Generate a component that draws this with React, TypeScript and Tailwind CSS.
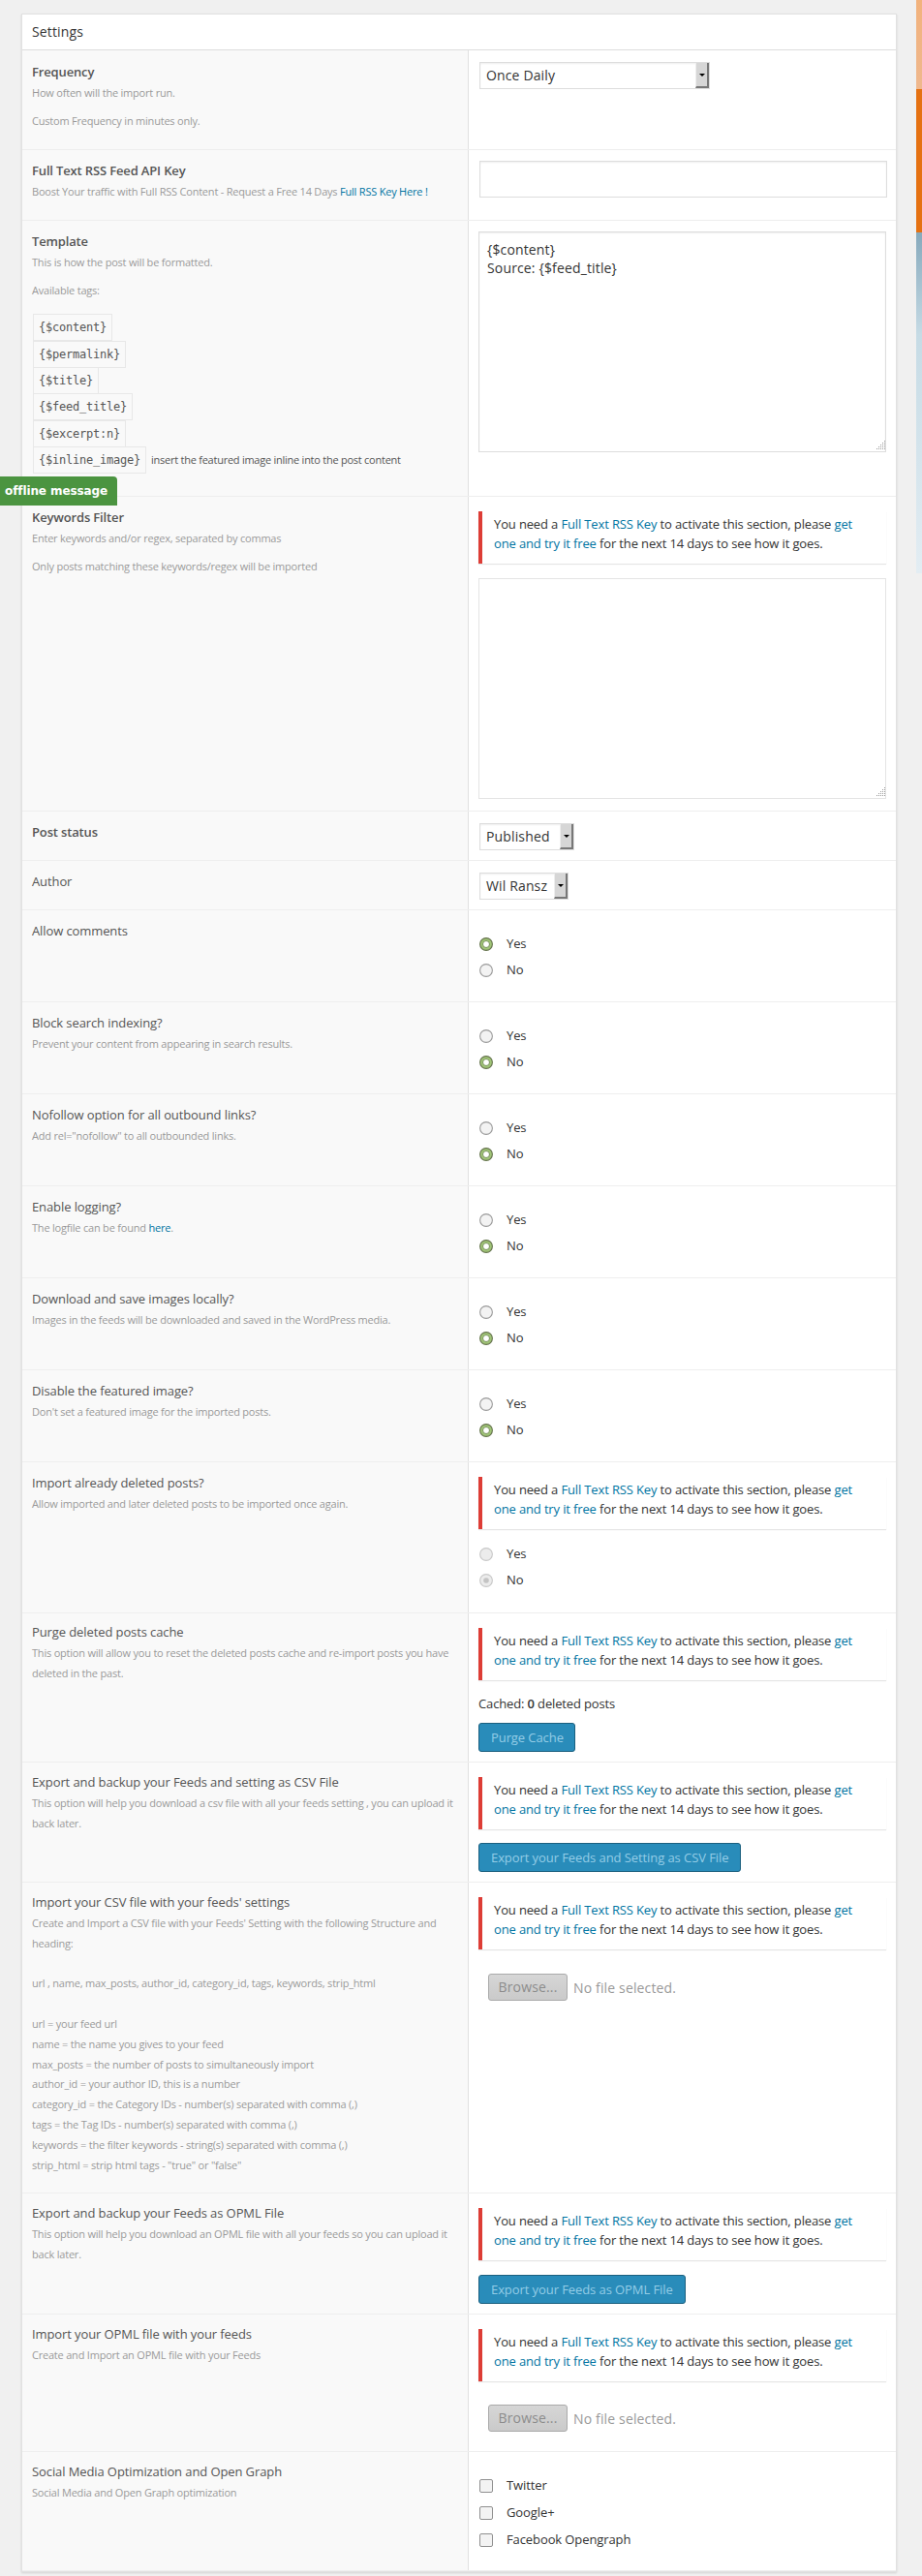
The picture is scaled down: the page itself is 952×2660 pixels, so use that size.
import type { ReactNode } from 'react';

type Option = { label: string; checked?: boolean };

function Link({ children }: { children: ReactNode }) {
  return <a href="#" className="text-[#0074a2]">{children}</a>;
}

function Row({ title, bold, desc, height, children, pad = 'pt-[11px]', className = '' }: {
  title: string;
  bold?: boolean;
  desc?: ReactNode;
  height: string;
  children: ReactNode;
  pad?: string;
  className?: string;
}) {
  return (
    <div className={`flex border-b border-[#eeeeee] ${height}`}>
      <div className={`w-[461px] shrink-0 bg-[#f9f9f9] border-r border-[#e1e1e1] px-[10px] ${pad}`}>
        <h4 className={`text-[13px] leading-[20px] text-[#555] ${bold ? 'font-semibold tracking-[-0.15px]' : 'tracking-[-0.1px]'}`}>{title}</h4>
        <div className="mt-[2px] space-y-[8px] text-[11px] leading-[20.8px] tracking-[-0.21px] text-[#999]">{desc}</div>
      </div>
      <div className={`flex-1 pl-[10px] pr-[10px] ${className}`}>{children}</div>
    </div>
  );
}

function Notice() {
  return (
    <div className="mt-[15px] h-[54px] w-[421px] border-l-4 border-[#dd3d36] bg-white pl-[12px] pt-[4px] text-[13px] leading-[19.5px] tracking-[-0.14px] text-[#333] shadow-[0_1px_1px_0_rgba(0,0,0,0.1)]">
      You need a <Link>Full Text RSS Key</Link> to activate this section, please <Link>get<br />one and try it free</Link> for the next 14 days to see how it goes.
    </div>
  );
}

function Select({ value, width }: { value: string; width: string }) {
  return (
    <div className={`mt-[12px] ml-px flex h-[28px] border border-[#ddd] bg-white shadow-[inset_0_1px_2px_rgba(0,0,0,0.07)] ${width}`}>
      <span className="flex-1 pl-[6px] text-[14px] leading-[25px] tracking-[0.14px] whitespace-nowrap text-[#333]">{value}</span>
      <span className="flex w-[14px] shrink-0 items-center justify-center border-b-2 border-r-2 border-b-[#777] border-r-[#777] border-l border-l-[#eee] bg-[#d6d6d6]">
        <svg width="6" height="3" viewBox="0 0 6 3"><path d="M0 0h6L3 3z" fill="#000" /></svg>
      </span>
    </div>
  );
}

function Textarea({ className = '', children }: { className?: string; children?: ReactNode }) {
  return (
    <div className={`relative h-[228px] w-[421px] border bg-white px-[8px] py-[8px] text-[14px] leading-[19px] tracking-[0.15px] text-[#333] ${className}`}>
      {children}
      <svg className="absolute bottom-px right-0" width="10" height="10" viewBox="0 0 10 10">
        <path d="M9 0h1v1H9zM7 2h1v1H7zM9 2h1v1H9zM5 4h1v1H5zM7 4h1v1H7zM9 4h1v1H9zM3 6h1v1H3zM5 6h1v1H5zM7 6h1v1H7zM9 6h1v1H9zM1 8h1v1H1zM3 8h1v1H3zM5 8h1v1H5zM7 8h1v1H7zM9 8h1v1H9z" fill="#999" />
      </svg>
    </div>
  );
}

function Radio({ checked, disabled }: { checked?: boolean; disabled?: boolean }) {
  const ring = disabled ? '#c8c8c8' : checked ? '#66734f' : '#9a9a9a';
  const fill = disabled ? '#ececec' : checked ? '#a0c576' : '#f3f3f3';
  return (
    <svg width="14" height="14" viewBox="0 0 14 14">
      <circle cx="7" cy="7" r="6.4" fill={fill} stroke={ring} strokeWidth="1.1" />
      {checked && !disabled && <circle cx="7" cy="7" r="3.5" fill="#fff" stroke="#78925a" strokeWidth="1" />}
      {checked && disabled && <circle cx="7" cy="7" r="2.8" fill="#c4c4c4" />}
    </svg>
  );
}

function YesNo({ value, disabled, className = 'pt-[21px]' }: { value: 'Yes' | 'No'; disabled?: boolean; className?: string }) {
  const options: Option[] = [
    { label: 'Yes', checked: value === 'Yes' },
    { label: 'No', checked: value === 'No' },
  ];
  return (
    <div className={className}>
      {options.map(o => (
        <label key={o.label} className="ml-px flex h-[27px] items-center gap-[14px] text-[13px] tracking-[-0.1px] text-[#333]">
          <Radio checked={o.checked} disabled={disabled} />
          {o.label}
        </label>
      ))}
    </div>
  );
}

function Button({ children, className = '' }: { children: string; className?: string }) {
  return (
    <button className={`block h-[30px] rounded-[3px] border border-[#1b607f] bg-[#298cba] text-left pl-[12px] text-[13px] leading-[28px] tracking-[-0.08px] text-[#94cde7] ${className}`}>
      {children}
    </button>
  );
}

function FileInput({ className }: { className: string }) {
  return (
    <div className={`flex items-center pl-[10px] text-[14px] tracking-[0.15px] text-[#999] ${className}`}>
      <span className="h-[28px] w-[82px] rounded-[3px] border border-[#aaa] bg-gradient-to-b from-[#d6d6d6] to-[#cacaca] text-center leading-[26px] text-[#8c8c8c]">Browse...</span>
      <span className="ml-[6px]">No file selected.</span>
    </div>
  );
}

const TAGS = ['{$content}', '{$permalink}', '{$title}', '{$feed_title}', '{$excerpt:n}', '{$inline_image}'];

export default function App() {
  return (
    <div className="relative h-[2660px] w-[952px] overflow-hidden bg-[#f0f0f0] pl-[22px] pt-[14px] font-['Open_Sans',sans-serif]">
      <div className="w-[904px] border border-[#e1e1e1] bg-white shadow-[0_1px_2px_rgba(0,0,0,0.12)]">
        <h3 className="h-[37px] border-b border-[#ddd] pl-[10px] text-[14px] leading-[35px] tracking-[0.15px] text-[#333]">Settings</h3>

        <Row title="Frequency" bold height="h-[103px]" pad="pt-[12px]" desc={<><p>How often will the import run.</p><p>Custom Frequency in minutes only.</p></>}>
          <Select value="Once Daily" width="w-[238px]" />
        </Row>

        <Row title="Full Text RSS Feed API Key" bold height="h-[73px]"
          desc={<p>Boost Your traffic with Full RSS Content - Request a Free 14 Days <Link>Full RSS Key Here !</Link></p>}>
          <div className="ml-px mt-[11px] h-[38px] w-[421px] border border-[#ddd] bg-white shadow-[inset_0_1px_2px_rgba(0,0,0,0.07)]" />
        </Row>

        <Row title="Template" bold height="h-[285px]"
          desc={
            <>
              <p>This is how the post will be formatted.</p>
              <p>Available tags:</p>
              <div className="pt-[6px] pl-px">
                {TAGS.map(tag => (
                  <div key={tag} className="flex h-[27.4px] items-center text-[#555]">
                    <code className="h-[28px] border border-[#e8e8e8] px-[5px] font-['DejaVu_Sans_Mono',monospace] text-[12px] leading-[26px] tracking-[-0.22px]">{tag}</code>
                    {tag === '{$inline_image}' && <span className="ml-[5px] tracking-[-0.25px]">insert the featured image inline into the post content</span>}
                  </div>
                ))}
              </div>
            </>
          }>
          <Textarea className="mt-[11px] border-[#ddd] shadow-[inset_0_1px_2px_rgba(0,0,0,0.07)]">
            {'{$content}'}<br />Source: {'{$feed_title}'}
          </Textarea>
        </Row>

        <Row title="Keywords Filter" bold height="h-[325px]"
          desc={<><p>Enter keywords and/or regex, separated by commas</p><p>Only posts matching these keywords/regex will be imported</p></>}>
          <Notice />
          <Textarea className="mt-[15px] border-[#e4e4e4]" />
        </Row>

        <Row title="Post status" bold height="h-[51px]"><Select value="Published" width="w-[98px]" /></Row>
        <Row title="Author" height="h-[51px]"><Select value="Wil Ransz" width="w-[92px]" /></Row>

        <Row title="Allow comments" height="h-[95px]"><YesNo value="Yes" /></Row>
        <Row title="Block search indexing?" height="h-[95px]" desc="Prevent your content from appearing in search results."><YesNo value="No" /></Row>
        <Row title="Nofollow option for all outbound links?" height="h-[95px]" desc={'Add rel="nofollow" to all outbounded links.'}><YesNo value="No" /></Row>
        <Row title="Enable logging?" height="h-[95px]" desc={<p>The logfile can be found <Link>here</Link>.</p>}><YesNo value="No" /></Row>
        <Row title="Download and save images locally?" height="h-[95px]" desc="Images in the feeds will be downloaded and saved in the WordPress media."><YesNo value="No" /></Row>
        <Row title="Disable the featured image?" height="h-[95px]" desc="Don't set a featured image for the imported posts."><YesNo value="No" /></Row>

        <Row title="Import already deleted posts?" height="h-[156px]" desc="Allow imported and later deleted posts to be imported once again.">
          <Notice />
          <YesNo value="No" disabled className="pt-[12px]" />
        </Row>

        <Row title="Purge deleted posts cache" height="h-[154px]" pad="pt-[9px]" desc="This option will allow you to reset the deleted posts cache and re-import posts you have deleted in the past.">
          <Notice />
          <p className="mt-[14px] text-[13px] leading-[20px] tracking-[-0.14px] text-[#333]">Cached: <b className="font-semibold">0</b> deleted posts</p>
          <Button className="mt-[10px] w-[100px]">Purge Cache</Button>
        </Row>

        <Row title="Export and backup your Feeds and setting as CSV File" height="h-[124px]" pad="pt-[10px]" desc="This option will help you download a csv file with all your feeds setting , you can upload it back later.">
          <Notice />
          <Button className="mt-[14px] w-[271px]">Export your Feeds and Setting as CSV File</Button>
        </Row>

        <Row title="Import your CSV file with your feeds' settings" height="h-[321px]" pad="pt-[10px]"
          desc={
            <p>
              Create and Import a CSV file with your Feeds' Setting with the following Structure and heading:<br /><br />
              url , name, max_posts, author_id, category_id, tags, keywords, strip_html<br /><br />
              url = your feed url<br />
              name = the name you gives to your feed<br />
              max_posts = the number of posts to simultaneously import<br />
              author_id = your author ID, this is a number<br />
              category_id = the Category IDs - number(s) separated with comma (,)<br />
              tags = the Tag IDs - number(s) separated with comma (,)<br />
              keywords = the filter keywords - string(s) separated with comma (,)<br />
              strip_html = strip html tags - "true" or "false"
            </p>
          }>
          <Notice />
          <FileInput className="mt-[25px]" />
        </Row>

        <Row title="Export and backup your Feeds as OPML File" height="h-[125px]" pad="pt-[10px]" desc="This option will help you download an OPML file with all your feeds so you can upload it back later.">
          <Notice />
          <Button className="mt-[15px] w-[214px]">Export your Feeds as OPML File</Button>
        </Row>

        <Row title="Import your OPML file with your feeds" height="h-[142px]" pad="pt-[10px]" desc="Create and Import an OPML file with your Feeds">
          <Notice />
          <FileInput className="mt-[24px]" />
        </Row>

        <Row title="Social Media Optimization and Open Graph" height="h-[123px]" pad="pt-[10px]" desc="Social Media and Open Graph optimization" className="pt-[21px]">
          {['Twitter', 'Google+', 'Facebook Opengraph'].map(name => (
            <label key={name} className="ml-px flex h-[28px] items-center gap-[14px] text-[13px] tracking-[-0.1px] text-[#333]">
              <span className="size-[14px] rounded-[2px] border border-[#8f8f8f] bg-[#f3f3f3]" />
              {name}
            </label>
          ))}
        </Row>
      </div>

      {/* chat widget */}
      <div className="absolute left-0 top-[492px] h-[30px] w-[121px] rounded-tr-[4px] bg-[#4b9440] pl-[5px] font-['DejaVu_Sans',sans-serif] text-[12px] font-bold leading-[30px] tracking-[-0.1px] text-white">
        offline message
      </div>

      {/* desktop background at the window edge */}
      <div className="absolute right-0 top-0 flex h-[592px] w-[6px] flex-col">
        <div className="h-[92px] bg-gradient-to-b from-[#f2b27c] to-[#efb88e]" />
        <div className="h-[148px] bg-[#e57112]" />
        <div className="flex-1 bg-gradient-to-b from-[#86a9bc] via-[#c6dbe5] via-30% to-[#e3edf3]" />
      </div>
    </div>
  );
}
